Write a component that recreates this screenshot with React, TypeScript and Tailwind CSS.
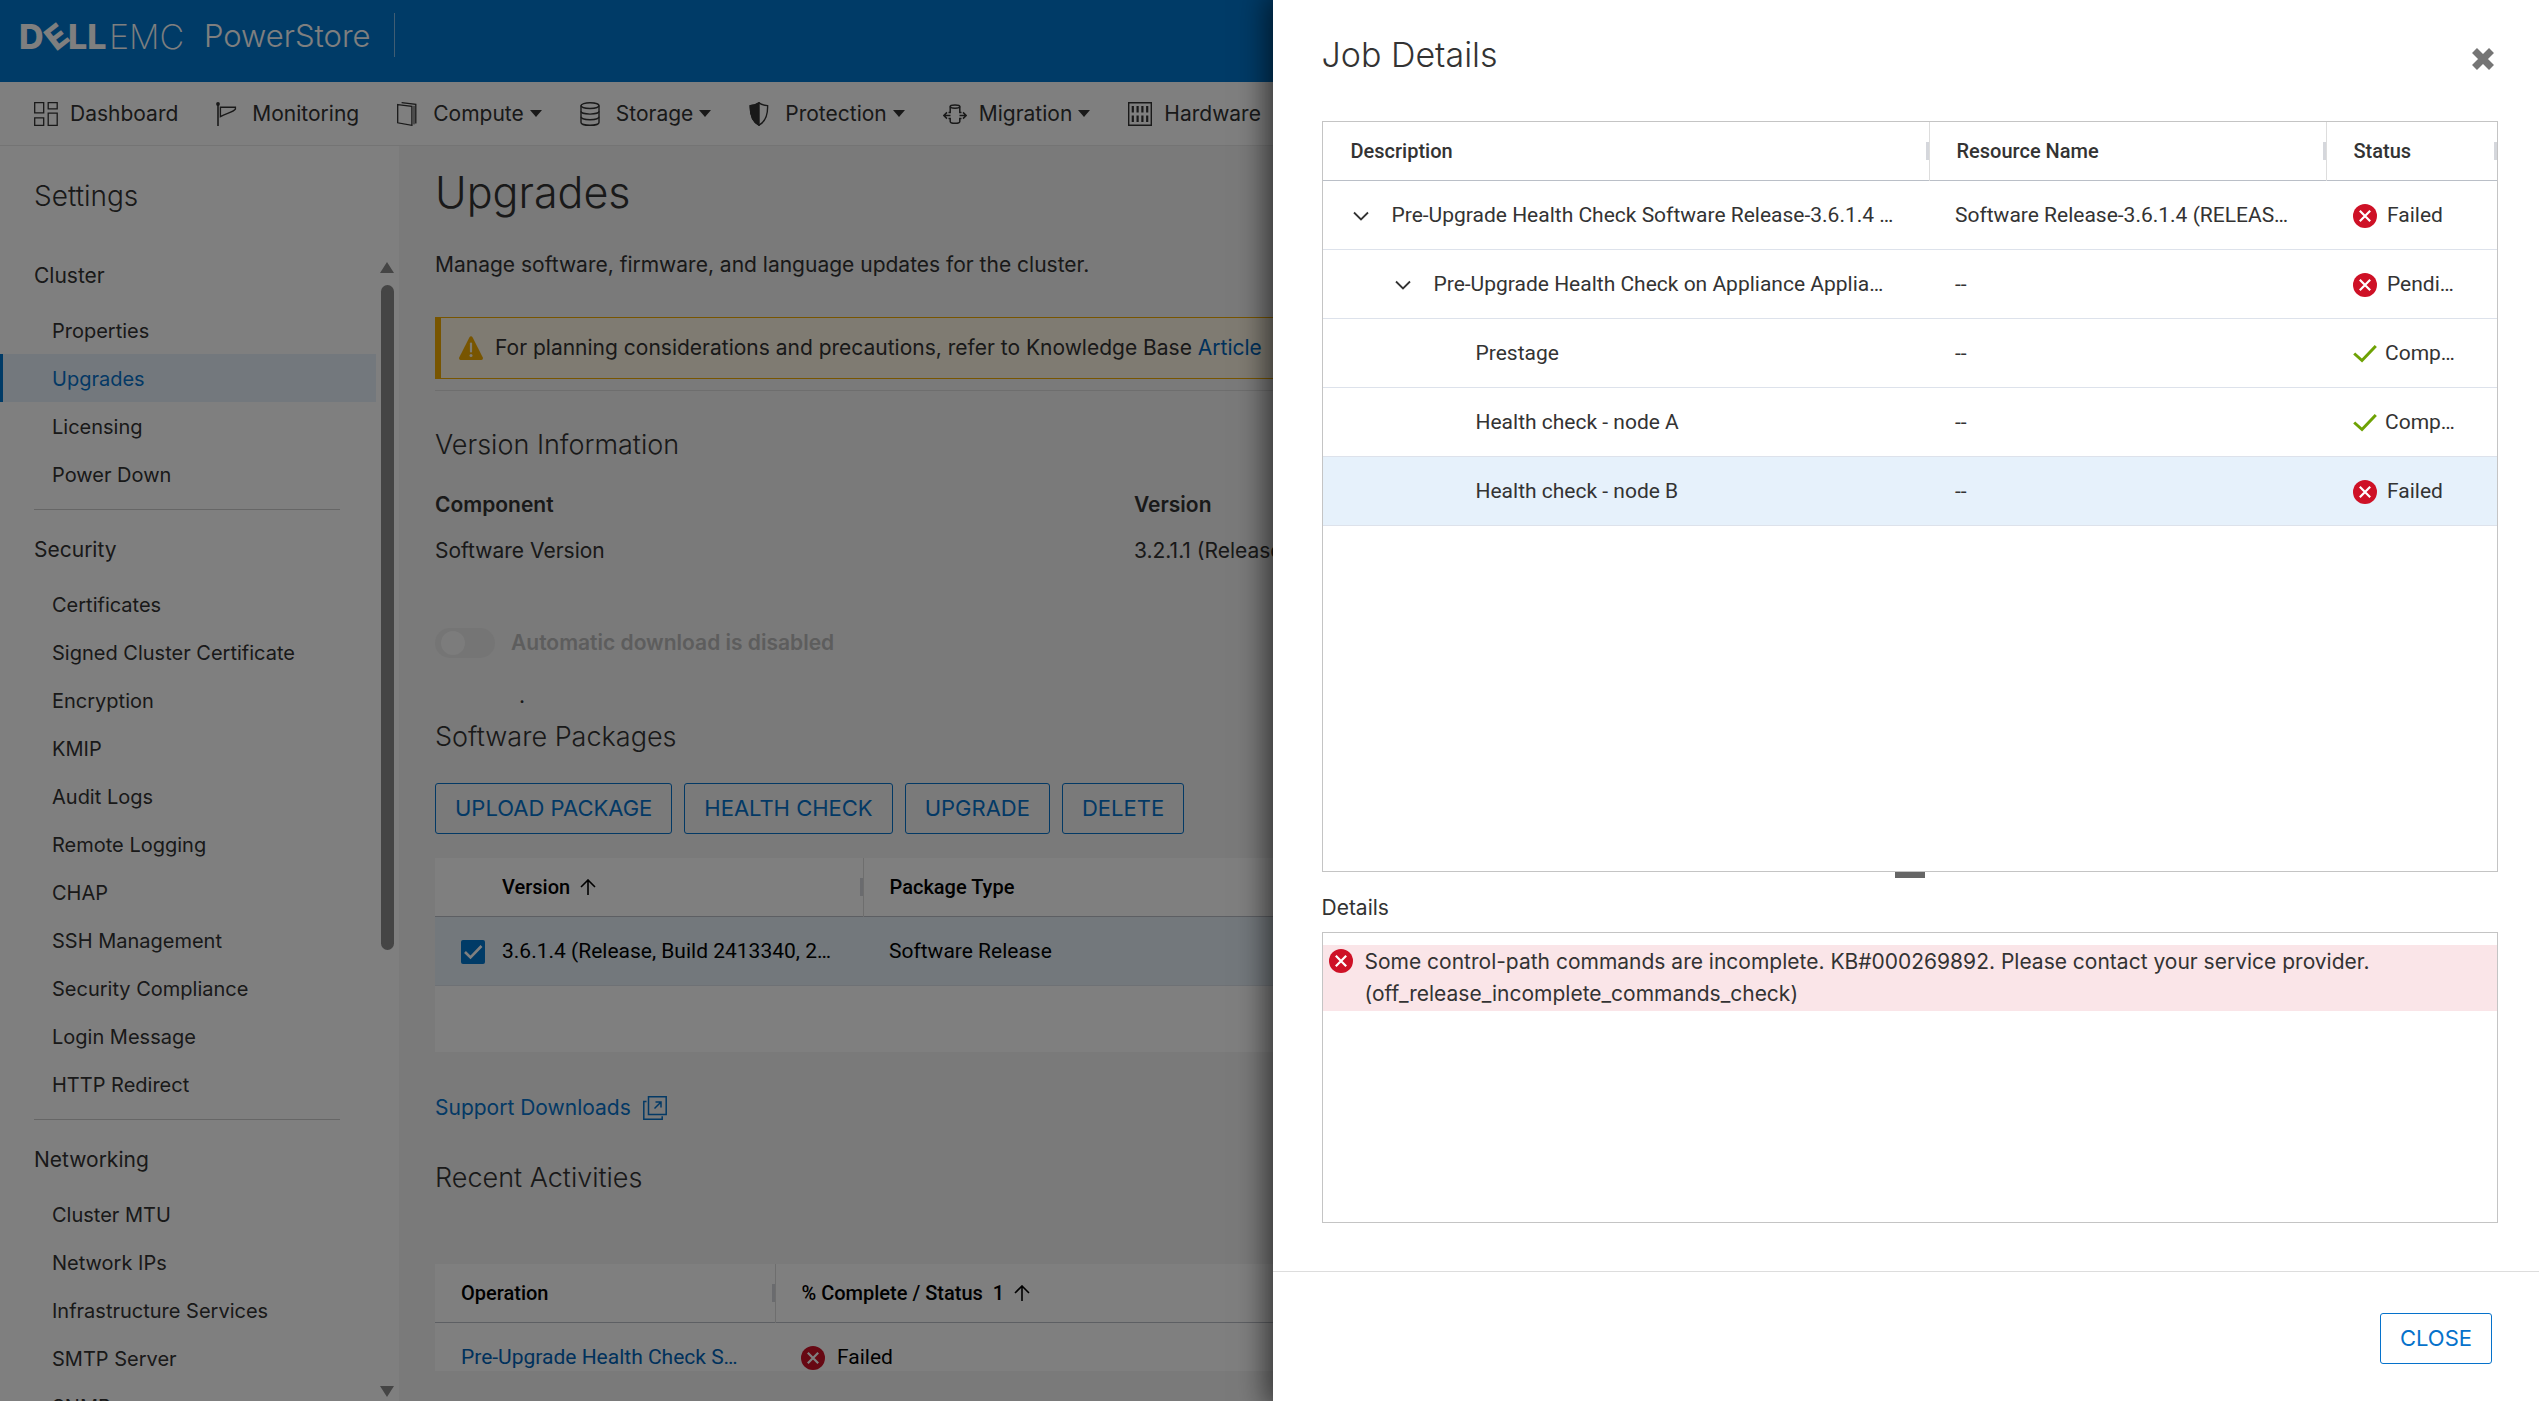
import React, { useState } from "react";
import clsx from "clsx";

type NavItem = { label: string; icon: React.ReactNode; menu?: boolean };

const NAV_ITEMS: NavItem[] = [
  { label: "Dashboard", icon: <DashboardIcon /> },
  { label: "Monitoring", icon: <FlagIcon /> },
  { label: "Compute", icon: <ComputeIcon />, menu: true },
  { label: "Storage", icon: <StorageIcon />, menu: true },
  { label: "Protection", icon: <ShieldIcon />, menu: true },
  { label: "Migration", icon: <MigrationIcon />, menu: true },
  { label: "Hardware", icon: <HardwareIcon /> },
];

const SETTINGS = [
  { title: "Cluster", items: ["Properties", "Upgrades", "Licensing", "Power Down"] },
  {
    title: "Security",
    items: [
      "Certificates",
      "Signed Cluster Certificate",
      "Encryption",
      "KMIP",
      "Audit Logs",
      "Remote Logging",
      "CHAP",
      "SSH Management",
      "Security Compliance",
      "Login Message",
      "HTTP Redirect",
    ],
  },
  {
    title: "Networking",
    items: ["Cluster MTU", "Network IPs", "Infrastructure Services", "SMTP Server", "SNMP"],
  },
];

type Job = {
  description: string;
  level: number;
  resource: string;
  status: string;
  ok?: boolean;
  selected?: boolean;
};

const JOBS: Job[] = [
  {
    description: "Pre-Upgrade Health Check Software Release-3.6.1.4 …",
    level: 0,
    resource: "Software Release-3.6.1.4 (RELEAS…",
    status: "Failed",
  },
  {
    description: "Pre-Upgrade Health Check on Appliance Applia…",
    level: 1,
    resource: "--",
    status: "Pendi…",
  },
  { description: "Prestage", level: 2, resource: "--", status: "Comp…", ok: true },
  { description: "Health check - node A", level: 2, resource: "--", status: "Comp…", ok: true },
  { description: "Health check - node B", level: 2, resource: "--", status: "Failed", selected: true },
];

/* ---------- icons ---------- */

function DashboardIcon() {
  return (
    <svg className="h-6 w-6" viewBox="0 0 24 24" fill="none" stroke="currentColor" strokeWidth="1.3">
      <path d="M.7.7h9v10.2h-9zM14.2.7h9v6.2h-9zM.7 15.8h9v7.5h-9zM14.2 11.2h9v12.1h-9z" />
    </svg>
  );
}

function FlagIcon() {
  return (
    <svg className="h-6 w-6" viewBox="0 0 24 24" fill="none" stroke="currentColor" strokeWidth="1.4">
      <circle cx="2" cy="2" r="1.9" fill="currentColor" stroke="none" />
      <path d="M2 2v22" strokeWidth="1.6" />
      <path d="M4.4 5.3h15v1.8c-2 3-9 4.2-15 7.5z" />
    </svg>
  );
}

function ComputeIcon() {
  return (
    <svg className="h-6 w-6" viewBox="0 0 24 24" fill="none" stroke="currentColor" strokeWidth="1.3">
      <path d="M.7 2.6l14.2 1.7v19L.7 20.8z" />
      <path d="M4.6.7l14.2 1.7v19.2" />
      <path d="M17 3.8v18.6" strokeWidth="1" />
    </svg>
  );
}

function StorageIcon() {
  return (
    <svg className="h-6 w-6" viewBox="0 0 24 24" fill="none" stroke="currentColor" strokeWidth="1.4">
      <ellipse cx="10" cy="3.6" rx="9" ry="2.9" />
      <path d="M1 3.6v16.8c0 1.6 4 2.9 9 2.9s9-1.3 9-2.9V3.6" />
      <path d="M1 9.2c0 1.6 4 2.9 9 2.9s9-1.3 9-2.9M1 14.8c0 1.6 4 2.9 9 2.9s9-1.3 9-2.9" />
    </svg>
  );
}

function ShieldIcon() {
  return (
    <svg className="h-6 w-6" viewBox="0 0 24 24" fill="none" stroke="currentColor" strokeWidth="1.4">
      <path d="M10 .8c3 2 5 2.600 8.600 2.800.3 9-1.600 15.800-8.600 19.600C3 19.400 1 12.600 1.300 3.600 5 3.400 7 2.800 10 .8z" />
      <path d="M10 .8v22.400C3 19.400 1 12.600 1.300 3.600 5 3.400 7 2.800 10 .8z" fill="currentColor" />
    </svg>
  );
}

function MigrationIcon() {
  return (
    <svg className="h-6 w-6" viewBox="0 0 24 24" fill="none" stroke="currentColor" strokeWidth="1.5">
      <ellipse cx="12" cy="4.6" rx="4.8" ry="1.6" />
      <path d="M7.2 4.6V10.500H5.500M16.800 4.600V10.500h1.700M5.500 16.500h1.700v3c0 1.300 1.500 1.800 4.800 1.800s4.800-.5 4.800-1.800v-3h1.700" />
      <path d="M7.500 13.500H1M4 10.400l-3.100 3.100L4 16.600M16.500 13.500H23M20 10.400l3.100 3.100-3.100 3.100" />
    </svg>
  );
}

function HardwareIcon() {
  return (
    <svg className="h-6 w-6" viewBox="0 0 24 24" fill="none" stroke="currentColor">
      <path d="M.7.7h22.600v22.600H.7z" strokeWidth="1.4" />
      <path
        d="M4.800 4v6.500M9.600 4v6.500M14.400 4v6.500M19.200 4v6.500M4.800 13.500V20M9.600 13.500V20M14.400 13.500V20M19.200 13.500V20"
        strokeWidth="2.200"
      />
    </svg>
  );
}

function WarningIcon() {
  return (
    <svg className="h-6 w-6 shrink-0" viewBox="0 0 24 24">
      <path
        d="M10.600 1c.6-1.100 2.200-1.100 2.800 0l10.400 20.600c.5 1.100-.2 2.400-1.400 2.400H1.600C.4 24-.3 22.700.2 21.600z"
        fill="#f0ab00"
      />
      <path d="M12 7.500v8" stroke="#fff8e6" strokeWidth="2.200" strokeLinecap="round" />
      <circle cx="12" cy="19.500" r="1.500" fill="#fff8e6" />
    </svg>
  );
}

function ErrorIcon() {
  return (
    <svg className="h-6 w-6 shrink-0" viewBox="0 0 24 24">
      <circle cx="12" cy="12" r="12" fill="#ce1126" />
      <path d="M6.800 6.800l10.400 10.400M17.200 6.800L6.800 17.200" stroke="#fff" strokeWidth="2.200" />
    </svg>
  );
}

function CheckIcon() {
  return (
    <svg className="h-6 w-6 shrink-0" viewBox="0 0 24 24" fill="none" stroke="#6ea204" strokeWidth="3">
      <path d="M1.200 11.500l7.800 7L22.800 4" />
    </svg>
  );
}

function ArrowUpIcon() {
  return (
    <svg className="h-4 w-4" viewBox="0 0 16 16" fill="none" stroke="currentColor" strokeWidth="1.600">
      <path d="M8 16V1M1 8l7-7 7 7" />
    </svg>
  );
}

function ChevronIcon() {
  return (
    <svg className="h-6 w-4" viewBox="0 0 16 24" fill="none" stroke="currentColor" strokeWidth="1.800">
      <path d="M1 8.500l7 7 7-7" />
    </svg>
  );
}

function ExternalIcon() {
  return (
    <svg className="h-6 w-6" viewBox="0 0 24 24" fill="none" stroke="currentColor" strokeWidth="1.500">
      <path d="M5.500.8h17.700v17.700H5.500z" />
      <path d="M3.500 5.500H.8v17.700h18.400v-3" />
      <path d="M11.500 12.500l6-6M12.500 6h5.500v5.500" />
    </svg>
  );
}

function Logo() {
  return (
    <svg className="h-12 w-41 overflow-visible" viewBox="0 0 164 48" fill="#fff" aria-label="Dell EMC">
      <text x="-1" y="36" fontFamily="Inter, sans-serif" fontSize="34" fontWeight="800">
        D
      </text>
      <text x="27" y="35" fontFamily="Inter, sans-serif" fontSize="32" fontWeight="800" transform="rotate(-38 37 24)">
        E
      </text>
      <text x="48" y="36" fontFamily="Inter, sans-serif" fontSize="34" fontWeight="800">
        LL
      </text>
      <text x="89" y="36" fontFamily="Inter, sans-serif" fontSize="34" fontWeight="200">
        EMC
      </text>
    </svg>
  );
}

/* ---------- page ---------- */

function Header() {
  return (
    <header className="flex h-[82px] shrink-0 items-start bg-[#0076ce] pt-[13px] pl-5 text-white">
      <Logo />
      <span className="ml-5 text-[31px] leading-[46px] font-light">PowerStore</span>
      <span className="ml-6 h-11 w-px bg-white/50" />
    </header>
  );
}

function TopNav() {
  return (
    <nav className="flex h-16 shrink-0 items-center gap-[38px] border-b border-[#e8e8e8] bg-white pl-[34px]">
      {NAV_ITEMS.map((item) => (
        <button key={item.label} className="flex items-center text-[21px] leading-8 whitespace-nowrap">
          <span className="mr-3">{item.icon}</span>
          {item.label}
          {item.menu && <span className="ml-1.5 border-x-[6px] border-t-[7px] border-x-transparent border-t-[#333]" />}
        </button>
      ))}
    </nav>
  );
}

function Sidebar() {
  const [active, setActive] = useState("Upgrades");

  return (
    <aside className="flex w-[399px] shrink-0 flex-col bg-white">
      <h2 className="shrink-0 px-[34px] pt-7 pb-[38px] text-[28px] leading-[44px] font-light">Settings</h2>
      <div className="flex min-h-0 flex-1">
        <div className="w-[376px] overflow-hidden">
          {SETTINGS.map((group, i) => (
            <section key={group.title}>
              {i > 0 && <hr className="mt-[11px] mr-9 mb-5 ml-[34px] border-[#ccc]" />}
              <h3 className="mb-2.5 px-[34px] text-[21px] leading-10">{group.title}</h3>
              <ul>
                {group.items.map((item) => (
                  <li key={item}>
                    <button
                      onClick={() => setActive(item)}
                      className={clsx(
                        "block h-12 w-full border-l-[3px] pt-0.5 pl-[49px] text-left text-xl",
                        item === active
                          ? "border-[#0076ce] bg-[#e6f1fa] text-[#0672cb]"
                          : "border-transparent"
                      )}
                    >
                      {item}
                    </button>
                  </li>
                ))}
              </ul>
            </section>
          ))}
        </div>
        {/* scrollbar */}
        <div className="flex flex-1 flex-col items-center pt-1.5 pr-px pb-1">
          <span className="border-x-[7px] border-b-[11px] border-x-transparent border-b-[#8a8a8a]" />
          <span className="mt-3 h-[665px] w-[13px] rounded-full bg-[#8a8a8a]" />
          <span className="mt-auto border-x-[7px] border-t-[11px] border-x-transparent border-t-[#8a8a8a]" />
        </div>
      </div>
    </aside>
  );
}

function HeadCell({
  children,
  className,
  last,
}: {
  children: React.ReactNode;
  className?: string;
  last?: boolean;
}) {
  return (
    <th className={clsx("h-[58px] border-[#ddd] p-0 text-left text-xl font-medium", !last && "border-r", className)}>
      <div className="flex items-center justify-between">
        <span className="flex items-center gap-2.5">{children}</span>
        <span className="h-[18px] w-[3px] bg-[#d5d7dc]" />
      </div>
    </th>
  );
}

function OutlineButton({ children, onClick }: { children: React.ReactNode; onClick?: () => void }) {
  return (
    <button
      onClick={onClick}
      className="h-[51px] rounded-[3px] border border-[#0672cb] px-[19px] text-[22px] whitespace-nowrap text-[#0672cb]"
    >
      {children}
    </button>
  );
}

function UpgradesPage() {
  return (
    <main className="min-w-0 flex-1 overflow-hidden bg-[#f4f4f4] pb-[30px] pl-9">
      <div className="h-full overflow-hidden pt-5">
        <h1 className="text-[43px] leading-[52px] font-light">Upgrades</h1>
        <p className="mt-[31px] text-[21px] leading-8">
          Manage software, firmware, and language updates for the cluster.
        </p>

        <div className="mt-9 flex h-[62px] items-center gap-3 border border-l-[6px] border-[#f0ab00] bg-[#fff6e4] pl-[18px] text-[21px]">
          <WarningIcon />
          <p className="whitespace-nowrap">
            For planning considerations and precautions, refer to Knowledge Base{" "}
            <a href="#kb" className="text-[#0063b8]">
              Article
            </a>
          </p>
        </div>
        <hr className="mt-[11px] border-[#ddd]" />

        <h2 className="mt-[34px] text-[27px] leading-10 font-light">Version Information</h2>
        <table className="mt-[17px] w-full table-fixed text-left text-[21px]">
          <thead>
            <tr className="h-[46px]">
              <th className="w-[699px] p-0 font-semibold">Component</th>
              <th className="p-0 font-semibold">Version</th>
            </tr>
          </thead>
          <tbody>
            <tr className="h-[46px]">
              <td className="p-0">Software Version</td>
              <td className="p-0">3.2.1.1 (Release)</td>
            </tr>
          </tbody>
        </table>

        <label className="mt-[54px] flex h-[30px] items-center gap-4 text-[21px] font-semibold text-[#bbb]">
          <input type="checkbox" role="switch" disabled className="peer sr-only" />
          <span className="flex h-[30px] w-15 items-center rounded-full bg-[#eaeaea] pl-1.5">
            <span className="h-6 w-6 rounded-full bg-[#f8f8f8]" />
          </span>
          Automatic download is disabled
        </label>
        <p className="mt-[22px] pl-21 text-[21px] leading-8">.</p>

        <h2 className="mt-[5px] text-[27px] leading-10 font-light">Software Packages</h2>
        <div className="mt-[26px] flex gap-3">
          <OutlineButton>UPLOAD PACKAGE</OutlineButton>
          <OutlineButton>HEALTH CHECK</OutlineButton>
          <OutlineButton>UPGRADE</OutlineButton>
          <OutlineButton>DELETE</OutlineButton>
        </div>

        <div className="mt-6 h-[194px] bg-white font-[Roboto,sans-serif]">
          <table className="w-full table-fixed text-[21px] text-black">
            <thead>
              <tr className="border-b border-[#babfc7]">
                <HeadCell className="w-[428px] pl-[67px]">
                  Version <ArrowUpIcon />
                </HeadCell>
                <HeadCell className="pl-[26px]" last>
                  Package Type
                </HeadCell>
              </tr>
            </thead>
            <tbody>
              <tr className="h-[69px] border-b border-[#dde2eb] bg-[#e6f1f8]">
                <td className="p-0 pt-0.5 pl-[26px]">
                  <label className="flex items-center gap-[17px]">
                    <input type="checkbox" defaultChecked className="peer sr-only" />
                    <svg className="h-6 w-6" viewBox="0 0 24 24" fill="none">
                      <rect width="24" height="24" rx="2" fill="#0076ce" />
                      <path d="M4 12l5.500 5.500L20.500 6" stroke="#fff" strokeWidth="2.600" />
                    </svg>
                    3.6.1.4 (Release, Build 2413340, 2…
                  </label>
                </td>
                <td className="p-0 pt-0.5 pl-[26px]">Software Release</td>
              </tr>
            </tbody>
          </table>
        </div>

        <a href="#downloads" className="mt-10 flex items-center gap-3 text-[21px] leading-8 text-[#0672cb]">
          Support Downloads <ExternalIcon />
        </a>

        <h2 className="mt-[34px] text-[27px] leading-10 font-light">Recent Activities</h2>
        <div className="mt-[66px] bg-white font-[Roboto,sans-serif]">
          <table className="w-full table-fixed text-[21px] text-black">
            <thead>
              <tr className="border-b border-[#babfc7]">
                <HeadCell className="w-[340px] pl-[26px]">Operation</HeadCell>
                <HeadCell className="pl-[26px]" last>
                  <span>% Complete / Status</span>
                  <span>1</span>
                  <ArrowUpIcon />
                </HeadCell>
              </tr>
            </thead>
            <tbody>
              <tr className="h-[69px]">
                <td className="p-0 pt-0.5 pl-[26px]">
                  <a href="#job" className="text-[#0063b8]">
                    Pre-Upgrade Health Check S…
                  </a>
                </td>
                <td className="p-0 pt-0.5 pl-[26px]">
                  <span className="flex items-center gap-3">
                    <ErrorIcon /> Failed
                  </span>
                </td>
              </tr>
            </tbody>
          </table>
        </div>
      </div>
    </main>
  );
}

const INDENT = ["pl-[30px]", "pl-[72px]", "pl-[153px]"];

function JobDetails({ onClose }: { onClose: () => void }) {
  return (
    <div
      role="dialog"
      aria-label="Job Details"
      className="absolute inset-y-0 right-0 flex w-[calc(50%-3px)] flex-col bg-white shadow-[0_0_28px_6px_rgba(0,0,0,0.6)]"
    >
      <div className="flex items-end justify-between pt-[34px] pr-11 pl-[49px]">
        <h2 className="text-[34px] leading-[42px] font-light">Job Details</h2>
        <button aria-label="Close" onClick={onClose} className="mb-[5px] text-[#757575]">
          <svg className="h-6 w-6" viewBox="0 0 24 24" stroke="currentColor" strokeWidth="7">
            <path d="M3.500 3.500l17 17M20.500 3.500l-17 17" />
          </svg>
        </button>
      </div>

      <div className="mt-[45px] mr-[41px] ml-[49px] min-h-0 flex-1 border border-[#c4c4c4] font-[Roboto,sans-serif] text-[21px]">
        <table className="w-full table-fixed">
          <thead>
            <tr className="border-b border-[#babfc7]">
              <HeadCell className="pl-7">Description</HeadCell>
              <HeadCell className="w-[397px] pl-[27px]">Resource Name</HeadCell>
              <HeadCell className="w-[171px] pl-[27px]" last>
                Status
              </HeadCell>
            </tr>
          </thead>
          <tbody>
            {JOBS.map((job) => (
              <tr
                key={job.description}
                className={clsx("h-[69px] border-b border-[#dde2eb] whitespace-nowrap", job.selected && "bg-[#e6f1fb]")}
              >
                <td className={clsx("p-0 pt-[3px]", INDENT[job.level])}>
                  <span className="flex items-center gap-[23px]">
                    {job.level < 2 && (
                      <button aria-label="Collapse">
                        <ChevronIcon />
                      </button>
                    )}
                    {job.description}
                  </span>
                </td>
                <td className="p-0 pt-[3px] pl-[26px]">{job.resource}</td>
                <td className="p-0 pt-[3px] pl-[27px]">
                  <span className={clsx("flex items-center", job.ok ? "gap-2" : "gap-2.5")}>
                    {job.ok ? <CheckIcon /> : <ErrorIcon />}
                    {job.status}
                  </span>
                </td>
              </tr>
            ))}
          </tbody>
        </table>
      </div>
      {/* splitter handle */}
      <div className="mr-[41px] ml-[49px] flex shrink-0 justify-center">
        <span className="h-1.5 w-[30px] bg-[#666]" />
      </div>

      <h3 className="mt-3.5 ml-[49px] text-[21px] leading-8">Details</h3>
      <div className="mt-2 mr-[41px] ml-[49px] h-[291px] shrink-0 border border-[#c4c4c4]">
        <div className="mt-3 flex gap-3 bg-[#fae5e8] py-px pl-1.5 text-[21px] leading-8">
          <span className="pt-[3px]">
            <ErrorIcon />
          </span>
          <p>
            Some control-path commands are incomplete. KB#000269892. Please contact your service provider.
            <br />
            (off_release_incomplete_commands_check)
          </p>
        </div>
      </div>

      <footer className="mt-12 flex h-[130px] shrink-0 justify-end border-t border-[#ddd] pt-[41px] pr-[47px]">
        <OutlineButton onClick={onClose}>CLOSE</OutlineButton>
      </footer>
    </div>
  );
}

export default function App() {
  const [open, setOpen] = useState(true);

  return (
    <div className="relative flex h-screen flex-col overflow-hidden font-[Inter,sans-serif] text-[#333]">
      <Header />
      <TopNav />
      <div className="flex min-h-0 flex-1">
        <Sidebar />
        <UpgradesPage />
      </div>
      {open && (
        <>
          <div className="absolute inset-0 bg-black/50" />
          <JobDetails onClose={() => setOpen(false)} />
        </>
      )}
    </div>
  );
}
